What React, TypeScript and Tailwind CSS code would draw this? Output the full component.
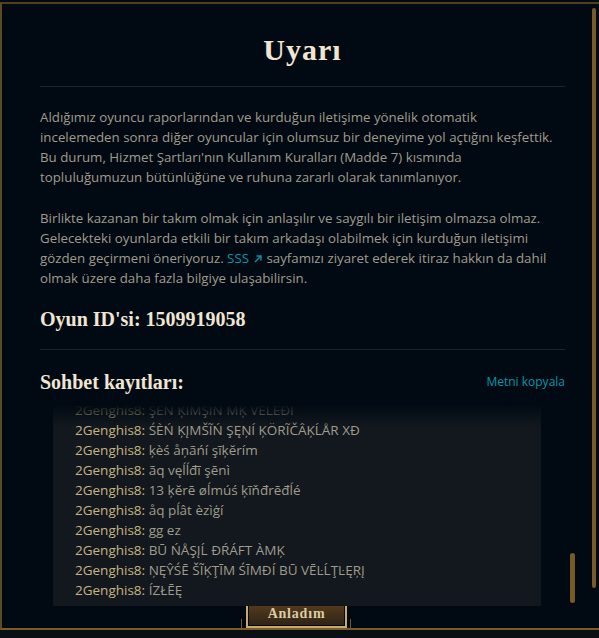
import React from 'react';

const CHAT_LINES = [
  'ŞEN ĶIMŞIN MĶ VELEĐI',
  'ŚÈŃ ĶĮMŠĨŃ ŞĘŅÍ ĶÖRĨČÂĶĹÅR XĐ',
  'ķèś åņãńí şĩķĕrím',
  'ãq vęĺĺđī şēnì',
  '13 ķĕrē øĺmúś ķĩňđrēđĺé',
  'åq pĺât èzìģí',
  'gg ez',
  'BŪ ŃÅŞĮĹ ĐŔÁFT ÀMĶ',
  'ŅĘŶŚĒ ŠĨĶŢĪM ŚĪMĐÍ BŪ VĒĿĹŢĿĘŖĮ',
  'ÍZŁĒĘ',
];

const serif = "font-['Liberation_Serif',serif]";

const ArrowIcon = () => (
  <svg width="10" height="10" viewBox="0 0 10 10" className="inline-block ml-[4px] align-[-1px]">
    <path d="M2 8 L8 2 M3.5 2 H8 V6.5" stroke="#0596aa" strokeWidth="1.4" fill="none" />
  </svg>
);

export default function App() {
  return (
    <div className="w-[599px] h-[638px] bg-[#010a13] overflow-hidden flex flex-col font-['Open_Sans',sans-serif]">
      <div className="mt-[2px] h-[628px] flex border-t-2 border-l-2 border-b-2 border-t-[#4e3f1e] border-l-[#5c4a22] border-b-[#7a5c2a]">
        <main className="w-[588px] flex flex-col">
          <div className="w-[525px] ml-[38px] flex flex-col">
            <h1 className={`${serif} text-center text-[30px] leading-[36px] font-bold text-[#f0e6d2] tracking-[1px] mt-[28px] pb-[18px] border-b border-[#1e2328]`}>
              Uyarı
            </h1>
            <div className="mt-[20px] text-[13.3px] leading-[20px] text-[#a09b8c] whitespace-nowrap">
              <p>
                Aldığımız oyuncu raporlarından ve kurduğun iletişime yönelik otomatik
                <br />
                incelemeden sonra diğer oyuncular için olumsuz bir deneyime yol açtığını keşfettik.
                <br />
                Bu durum, Hizmet Şartları'nın Kullanım Kuralları (Madde 7) kısmında
                <br />
                topluluğumuzun bütünlüğüne ve ruhuna zararlı olarak tanımlanıyor.
              </p>
              <p className="mt-[21px]">
                Birlikte kazanan bir takım olmak için anlaşılır ve saygılı bir iletişim olmazsa olmaz.
                <br />
                Gelecekteki oyunlarda etkili bir takım arkadaşı olabilmek için kurduğun iletişimi
                <br />
                gözden geçirmeni öneriyoruz.{' '}
                <span className="text-[#0596aa]">
                  SSS
                  <ArrowIcon />
                </span>{' '}
                sayfamızı ziyaret ederek itiraz hakkın da dahil
                <br />
                olmak üzere daha fazla bilgiye ulaşabilirsin.
              </p>
            </div>
            <div className={`${serif} mt-[19px] pb-[18px] border-b border-[#1e2328] text-[20px] leading-[24px] font-bold text-[#f0e6d2]`}>
              Oyun ID'si: 1509919058
            </div>
            <div className="mt-[20px] flex items-center justify-between">
              <span className={`${serif} text-[20px] leading-[24px] font-bold text-[#f0e6d2]`}>Sohbet kayıtları:</span>
              <button className="text-[12px] text-[#0596aa]">Metni kopyala</button>
            </div>
          </div>

          <div className="mt-[11px] flex">
            <div className="relative ml-[51px] w-[488px] h-[201px] bg-[#12181e] overflow-hidden flex flex-col justify-end pb-[6px]">
              {CHAT_LINES.map((line, i) => (
                <div key={i} className="pl-[22px] text-[13.5px] leading-[20px] whitespace-nowrap">
                  <span className="text-[#c8b482]">2Genghis8:</span>{' '}
                  <span className="text-[#a09b8c]">{line}</span>
                </div>
              ))}
              <div className="absolute inset-x-0 top-0 h-[22px] bg-gradient-to-b from-[#010a13] to-transparent" />
            </div>
            <div className="ml-[29px] flex flex-col justify-end pb-[3px]">
              <div className="w-[5px] h-[50px] rounded-full bg-[#785a28]" />
            </div>
          </div>

          <div className="-mt-[7px] flex justify-center items-end">
            <div className="w-[1px] h-[9px] bg-[#785a28] mr-[3px]" />
            <button className="ml-[1px] w-[101px] h-[29px] border-2 border-[#c8aa6e] p-[1px] bg-[#010a13]">
              <span className={`${serif} flex items-center justify-center w-full h-full bg-gradient-to-b from-[#5c3e1d] to-[#2f2416] text-[14px] font-bold tracking-[0.8px] text-[#dccca1]`}>
                Anladım
              </span>
            </button>
            <div className="w-[1px] h-[9px] bg-[#785a28] ml-[3px]" />
          </div>
        </main>
        <div className="w-[9px] pt-[4px] pl-[2px]">
          <div className="w-[4px] h-[580px] rounded-full bg-[#7a5a2a]" />
        </div>
      </div>
      <div className="flex-1 bg-[#0a0f14]" />
    </div>
  );
}
